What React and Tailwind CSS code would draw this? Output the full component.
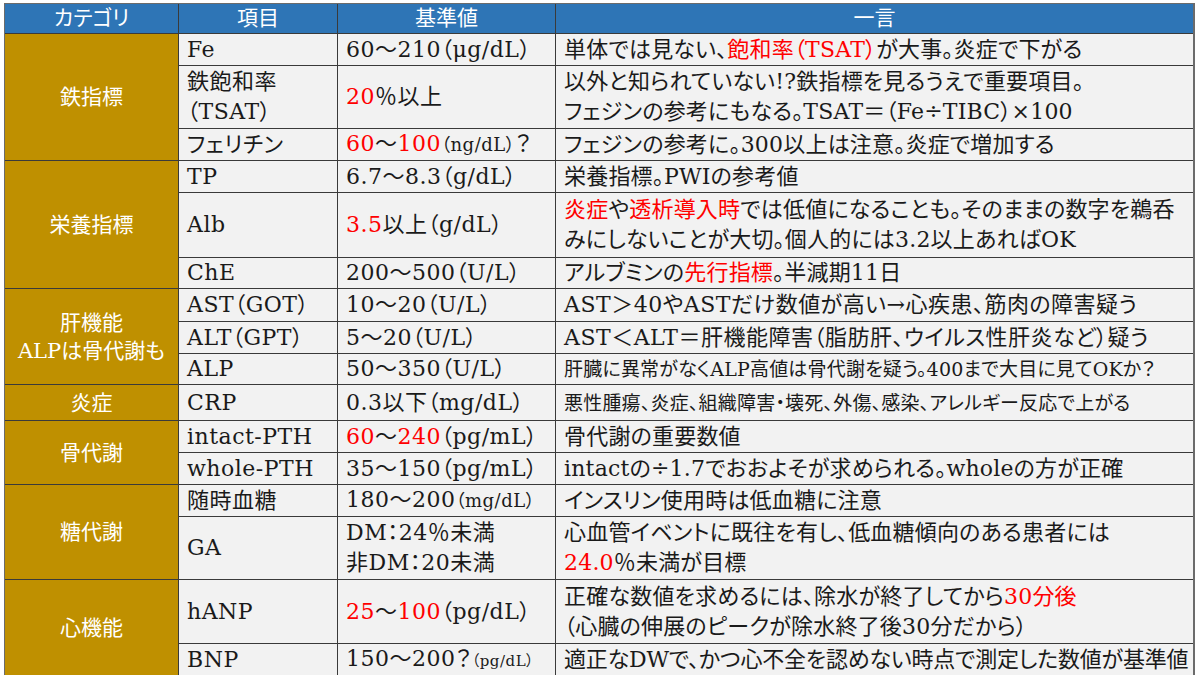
import React from 'react'

const R = ({ children }) => <span className="text-[#ff0000]">{children}</span>

// full-width forms
const T = '\uFF5E'
const LP = '\uFF08'
const RP = '\uFF09'
const PC = '\uFF05'
const Q = '\uFF1F'
const CO = '\uFF1A'
const EQ = '\uFF1D'

const groups = [
    {
        name: '鉄指標',
        span: 'row-span-3',
        rows: [
            ['Fe', `60${T}210${LP}μg/dL${RP}`, <>単体では見ない、<R>{`飽和率${LP}TSAT${RP}`}</R>が大事。炎症で下がる</>],
            [<>鉄飽和率<br />{`${LP}TSAT${RP}`}</>, <><R>20</R>{`${PC}以上`}</>, <>以外と知られていない!?鉄指標を見るうえで重要項目。<br />{`フェジンの参考にもなる。TSAT${EQ}${LP}Fe÷TIBC${RP}×100`}</>],
            ['フェリチン', <><R>60</R>{T}<R>100</R><span className="text-[18px]">{`${LP}ng/dL${RP}`}</span>{Q}</>, <>フェジンの参考に。300以上は注意。炎症で増加する</>],
        ],
    },
    {
        name: '栄養指標',
        span: 'row-span-3',
        rows: [
            ['TP', `6.7${T}8.3${LP}g/dL${RP}`, <>栄養指標。PWIの参考値</>],
            ['Alb', <><R>3.5</R>{`以上${LP}g/dL${RP}`}</>, <><R>炎症</R>や<R>透析導入時</R>では低値になることも。そのままの数字を鵜呑<br />みにしないことが大切。個人的には3.2以上あればOK</>],
            ['ChE', `200${T}500${LP}U/L${RP}`, <>アルブミンの<R>先行指標</R>。半減期11日</>],
        ],
    },
    {
        name: <>肝機能<br />ALPは骨代謝も</>,
        span: 'row-span-3',
        rows: [
            [`AST${LP}GOT${RP}`, `10${T}20${LP}U/L${RP}`, <span className="tracking-[0.5px]">{'AST\uFF1E40やASTだけ数値が高い→心疾患、筋肉の障害疑う'}</span>],
            [`ALT${LP}GPT${RP}`, `5${T}20${LP}U/L${RP}`, <span className="tracking-[0.5px]">{`AST\uFF1CALT${EQ}肝機能障害${LP}脂肪肝、ウイルス性肝炎など${RP}疑う`}</span>],
            ['ALP', `50${T}350${LP}U/L${RP}`, <span className="text-[19px]">{`肝臓に異常がなくALP高値は骨代謝を疑う。400まで大目に見てOKか${Q}`}</span>],
        ],
    },
    {
        name: '炎症',
        span: 'row-span-1',
        rows: [
            ['CRP', `0.3以下${LP}mg/dL${RP}`, <span className="text-[19px]">悪性腫瘍、炎症、組織障害・壊死、外傷、感染、アレルギー反応で上がる</span>],
        ],
    },
    {
        name: '骨代謝',
        span: 'row-span-2',
        rows: [
            ['intact-PTH', <><R>60</R>{T}<R>240</R>{`${LP}pg/mL${RP}`}</>, '骨代謝の重要数値'],
            ['whole-PTH', `35${T}150${LP}pg/mL${RP}`, 'intactの÷1.7でおおよそが求められる。wholeの方が正確'],
        ],
    },
    {
        name: '糖代謝',
        span: 'row-span-2',
        rows: [
            ['随時血糖', <>{`180${T}200`}<span className="text-[18px]">{`${LP}mg/dL${RP}`}</span></>, 'インスリン使用時は低血糖に注意'],
            ['GA', <>{`DM${CO}24${PC}未満`}<br />{`非DM${CO}20未満`}</>, <>心血管イベントに既往を有し、低血糖傾向のある患者には<br /><R>24.0</R>{`${PC}未満が目標`}</>],
        ],
    },
    {
        name: '心機能',
        span: 'row-span-2',
        rows: [
            ['hANP', <><R>25</R>{T}<R>100</R>{`${LP}pg/dL${RP}`}</>, <>正確な数値を求めるには、除水が終了してから<R>30分後</R><br />{`${LP}心臓の伸展のピークが除水終了後30分だから${RP}`}</>],
            ['BNP', <>{`150${T}200${Q}`}<span className="text-[15px]">{`${LP}pg/dL${RP}`}</span></>, <span className="tracking-[-0.2px]">適正なDWで、かつ心不全を認めない時点で測定した数値が基準値</span>],
        ],
    },
]

export default function App() {
    const cell = 'bg-[#f2f2f2] flex items-center pl-2 text-[#1a1a1a] leading-[30px] whitespace-nowrap overflow-hidden tracking-[0.5px]'
    const note = 'bg-[#f2f2f2] flex items-center pl-2 text-[#1a1a1a] leading-[30px] whitespace-nowrap overflow-hidden tracking-[0.2px]'
    const head = 'bg-[#2e75b6] flex items-center justify-center text-white text-[21px]'

    return (
        <div className="w-[1200px] h-[675px] overflow-hidden bg-white pt-[3px] pl-[4px] font-['DejaVu_Serif','Noto_Sans_CJK_JP',serif] text-[22px] [font-feature-settings:'palt']">
            <div className="grid w-max grid-cols-[173px_158px_217px_637px] grid-rows-[29px_31px_62px_31px_31px_64px_30px_32px_31px_30px_35px_31px_31px_31px_62px_63px_32px] gap-px bg-[#3a3a3a] border-t border-l border-r-2 border-[#6b6b6b]">
                <div className={head}>カテゴリ</div>
                <div className={head}>項目</div>
                <div className={head}>基準値</div>
                <div className={head}>一言</div>
                {groups.map((g, gi) => (
                    <React.Fragment key={gi}>
                        <div className={`${g.span} bg-[#bf9000] text-white text-[21px] flex items-center justify-center text-center leading-[28px]`}>
                            <div>{g.name}</div>
                        </div>
                        {g.rows.map((r, ri) => (
                            <React.Fragment key={ri}>
                                <div className={cell}><div>{r[0]}</div></div>
                                <div className={cell}><div>{r[1]}</div></div>
                                <div className={note}><div>{r[2]}</div></div>
                            </React.Fragment>
                        ))}
                    </React.Fragment>
                ))}
            </div>
        </div>
    )
}
